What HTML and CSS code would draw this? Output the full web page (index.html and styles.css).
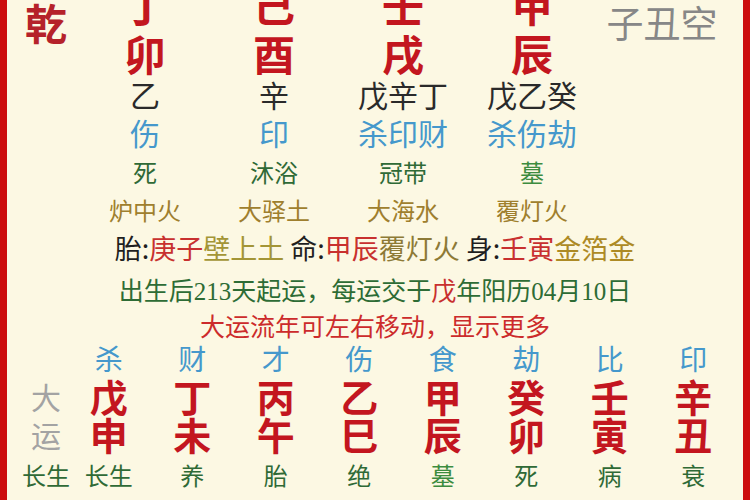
FILE: index.html
```html
<!DOCTYPE html>
<html lang="zh-CN">
<head>
<meta charset="utf-8">
<title>八字排盘</title>
<link rel="stylesheet" href="styles.css">
</head>
<body>
<div class="page">
  <section class="chart">
    <div class="side qian">乾</div>
    <div class="pillar">
      <div class="stem">丁</div>
      <div class="branch">卯</div>
      <div class="hidden">乙</div>
      <div class="god">伤</div>
      <div class="stage">死</div>
      <div class="nayin">炉中火</div>
    </div>
    <div class="pillar">
      <div class="stem">己</div>
      <div class="branch">酉</div>
      <div class="hidden">辛</div>
      <div class="god">印</div>
      <div class="stage">沐浴</div>
      <div class="nayin">大驿土</div>
    </div>
    <div class="pillar">
      <div class="stem">壬</div>
      <div class="branch">戌</div>
      <div class="hidden">戊辛丁</div>
      <div class="god">杀印财</div>
      <div class="stage">冠带</div>
      <div class="nayin">大海水</div>
    </div>
    <div class="pillar">
      <div class="stem">甲</div>
      <div class="branch">辰</div>
      <div class="hidden">戊乙癸</div>
      <div class="god">杀伤劫</div>
      <div class="stage tomb">墓</div>
      <div class="nayin">覆灯火</div>
    </div>
    <div class="side kong">子丑空</div>
  </section>

  <p class="line tai"><span class="k">胎:</span><span class="r">庚子</span><span class="o">壁上土</span> <span class="k">命:</span><span class="r">甲辰</span><span class="o2">覆灯火</span> <span class="k">身:</span><span class="r">壬寅</span><span class="o3">金箔金</span></p>
  <p class="line start">出生后<span class="num">213</span>天起运，每运交于<span class="r">戊</span>年阳历<span class="num">04</span>月<span class="num">10</span>日</p>
  <p class="line hint">大运流年可左右移动，显示更多</p>

  <section class="dayun">
    <div class="dy-col">
      <div class="dy-god"></div>
      <div class="dy-stem label">大</div>
      <div class="dy-branch label">运</div>
      <div class="dy-stage">长生</div>
    </div>
    <div class="dy-col">
      <div class="dy-god">杀</div>
      <div class="dy-stem">戊</div>
      <div class="dy-branch">申</div>
      <div class="dy-stage">长生</div>
    </div>
    <div class="dy-col">
      <div class="dy-god">财</div>
      <div class="dy-stem">丁</div>
      <div class="dy-branch">未</div>
      <div class="dy-stage">养</div>
    </div>
    <div class="dy-col">
      <div class="dy-god">才</div>
      <div class="dy-stem">丙</div>
      <div class="dy-branch">午</div>
      <div class="dy-stage">胎</div>
    </div>
    <div class="dy-col">
      <div class="dy-god">伤</div>
      <div class="dy-stem">乙</div>
      <div class="dy-branch">巳</div>
      <div class="dy-stage">绝</div>
    </div>
    <div class="dy-col">
      <div class="dy-god">食</div>
      <div class="dy-stem">甲</div>
      <div class="dy-branch">辰</div>
      <div class="dy-stage tomb">墓</div>
    </div>
    <div class="dy-col">
      <div class="dy-god">劫</div>
      <div class="dy-stem">癸</div>
      <div class="dy-branch">卯</div>
      <div class="dy-stage">死</div>
    </div>
    <div class="dy-col">
      <div class="dy-god">比</div>
      <div class="dy-stem">壬</div>
      <div class="dy-branch">寅</div>
      <div class="dy-stage">病</div>
    </div>
    <div class="dy-col">
      <div class="dy-god">印</div>
      <div class="dy-stem">辛</div>
      <div class="dy-branch">丑</div>
      <div class="dy-stage">衰</div>
    </div>
  </section>
</div>
</body>
</html>
```

FILE: styles.css
```css
html, body {
  margin: 0;
  padding: 0;
  background: #fcf8e3;
}

.page {
  box-sizing: border-box;
  width: 750px;
  height: 500px;
  overflow: hidden;
  background: #fcf8e3;
  border-left: 7px solid #cc0d0d;
  border-right: 7px solid #cc0d0d;
  font-family: "Noto Sans CJK SC", "Noto Sans", sans-serif;
  color: #2a2a2a;
}

/* ---- four pillars ---- */
.chart {
  display: grid;
  grid-template-columns: 69px repeat(4, 129px) 131px;
  padding-left: 4.5px;
  margin-top: -21px;
}

.pillar {
  display: flex;
  flex-direction: column;
  align-items: center;
  text-align: center;
  white-space: nowrap;
}

.side {
  display: flex;
  justify-content: center;
  white-space: nowrap;
  margin-top: 18px;
  height: 50px;
  line-height: 50px;
}

.qian {
  font-size: 42px;
  font-weight: 700;
  color: #b5222a;
}

.kong {
  font-size: 37px;
  color: #878787;
}

.stem, .branch {
  font-size: 42px;
  font-weight: 700;
  color: #c3161f;
}
.stem { height: 50px; line-height: 50px; }
.branch { height: 48px; line-height: 48px; }

.hidden {
  font-size: 30px;
  height: 34px;
  line-height: 34px;
  color: #2a2a2a;
}

.god {
  font-size: 30px;
  height: 42px;
  line-height: 42px;
  color: #4598cc;
}

.stage {
  font-size: 24px;
  height: 38px;
  line-height: 38px;
  color: #2f6a36;
}

.tomb { color: #3d8c3f; }

.nayin {
  font-size: 24px;
  height: 38px;
  line-height: 38px;
  color: #9f7f2e;
}

/* ---- info lines ---- */
.line {
  margin: 0;
  text-align: center;
  white-space: nowrap;
}

.tai {
  font-size: 27px;
  height: 38px;
  line-height: 38px;
}
.tai .k { color: #1f1f1f; }
.r { color: #c8302f; }
.o { color: #a39536; }
.o2 { color: #8d7a36; }
.o3 { color: #ad8a25; }

.start {
  font-size: 25px;
  height: 44px;
  line-height: 44px;
  color: #2e6c35;
}
.start .r { color: #c8302f; }
.num {
  font-family: "Liberation Serif", serif;
}

.hint {
  font-size: 25px;
  height: 28px;
  line-height: 28px;
  color: #cc2b2b;
}

/* ---- da yun ---- */
.dayun {
  display: grid;
  grid-template-columns: 42px repeat(8, 83.5px);
  padding-left: 18px;
}

.dy-col {
  display: flex;
  flex-direction: column;
  align-items: center;
  white-space: nowrap;
}

.dy-god {
  font-size: 28px;
  height: 38px;
  line-height: 38px;
  color: #4598cc;
}

.dy-stem, .dy-branch {
  font-size: 38px;
  font-weight: 700;
  height: 38px;
  line-height: 38px;
  color: #c3161f;
}

.dy-stem.label, .dy-branch.label {
  font-size: 30px;
  font-weight: 400;
  color: #a3a3a3;
}

.dy-stage {
  font-size: 24px;
  height: 44px;
  line-height: 44px;
  color: #2f6a36;
}
.dy-stage.tomb { color: #3d8c3f; }
```
